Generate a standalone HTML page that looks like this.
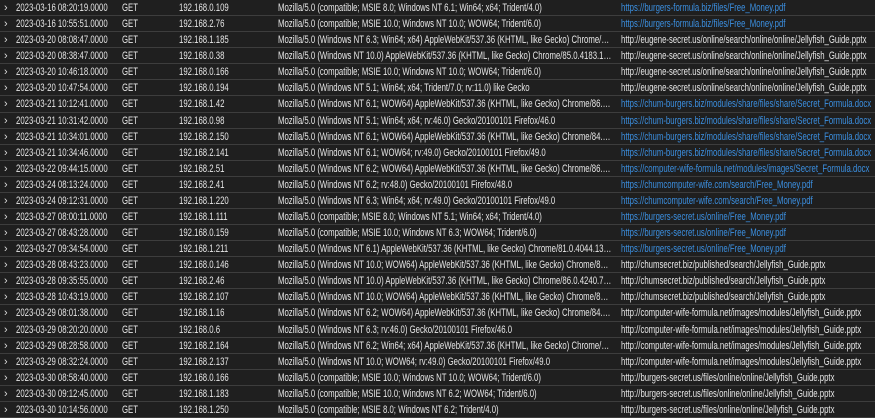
<!DOCTYPE html>
<html><head><meta charset="utf-8"><style>
html,body{margin:0;padding:0;background:#1e1e1e;width:875px;height:418px;overflow:hidden}
body{font-family:"Liberation Sans",sans-serif;font-size:10.8px;color:#e6e6e6}
.r{position:relative;height:16.08px;box-sizing:border-box;border-bottom:1px solid #3d3d3d;background:#1f1f1f;white-space:nowrap;overflow:hidden}
.r span{position:absolute;top:2px;line-height:12px;transform:scaleX(0.72);transform-origin:0 0}
.r span.c{transform:none}
.c{left:4px;color:#ddd}
.d{left:16px}.m{left:122px}.i{left:179px}
.u{left:278px;width:463px;overflow:hidden;text-overflow:ellipsis}
.l{left:621px}
.b{color:#3b8fe0}
</style></head><body>
<div class="r"><span class="c">›</span><span class="d">2023-03-16 08:20:19.0000</span><span class="m">GET</span><span class="i">192.168.0.109</span><span class="u">Mozilla/5.0 (compatible; MSIE 8.0; Windows NT 6.1; Win64; x64; Trident/4.0)</span><span class="l b">https://burgers-formula.biz/files/Free_Money.pdf</span></div>
<div class="r"><span class="c">›</span><span class="d">2023-03-16 10:55:51.0000</span><span class="m">GET</span><span class="i">192.168.2.76</span><span class="u">Mozilla/5.0 (compatible; MSIE 10.0; Windows NT 10.0; WOW64; Trident/6.0)</span><span class="l b">https://burgers-formula.biz/files/Free_Money.pdf</span></div>
<div class="r"><span class="c">›</span><span class="d">2023-03-20 08:08:47.0000</span><span class="m">GET</span><span class="i">192.168.1.185</span><span class="u">Mozilla/5.0 (Windows NT 6.3; Win64; x64) AppleWebKit/537.36 (KHTML, like Gecko) Chrome/85.0.4183.102</span><span class="l">http://eugene-secret.us/online/search/online/online/Jellyfish_Guide.pptx</span></div>
<div class="r"><span class="c">›</span><span class="d">2023-03-20 08:38:47.0000</span><span class="m">GET</span><span class="i">192.168.0.38</span><span class="u">Mozilla/5.0 (Windows NT 10.0) AppleWebKit/537.36 (KHTML, like Gecko) Chrome/85.0.4183.102 Safari</span><span class="l">http://eugene-secret.us/online/search/online/online/Jellyfish_Guide.pptx</span></div>
<div class="r"><span class="c">›</span><span class="d">2023-03-20 10:46:18.0000</span><span class="m">GET</span><span class="i">192.168.0.166</span><span class="u">Mozilla/5.0 (compatible; MSIE 10.0; Windows NT 10.0; WOW64; Trident/6.0)</span><span class="l">http://eugene-secret.us/online/search/online/online/Jellyfish_Guide.pptx</span></div>
<div class="r"><span class="c">›</span><span class="d">2023-03-20 10:47:54.0000</span><span class="m">GET</span><span class="i">192.168.0.194</span><span class="u">Mozilla/5.0 (Windows NT 5.1; Win64; x64; Trident/7.0; rv:11.0) like Gecko</span><span class="l">http://eugene-secret.us/online/search/online/online/Jellyfish_Guide.pptx</span></div>
<div class="r"><span class="c">›</span><span class="d">2023-03-21 10:12:41.0000</span><span class="m">GET</span><span class="i">192.168.1.42</span><span class="u">Mozilla/5.0 (Windows NT 6.1; WOW64) AppleWebKit/537.36 (KHTML, like Gecko) Chrome/86.0.4240.75 Safari</span><span class="l b">https://chum-burgers.biz/modules/share/files/share/Secret_Formula.docx</span></div>
<div class="r"><span class="c">›</span><span class="d">2023-03-21 10:31:42.0000</span><span class="m">GET</span><span class="i">192.168.0.98</span><span class="u">Mozilla/5.0 (Windows NT 5.1; Win64; x64; rv:46.0) Gecko/20100101 Firefox/46.0</span><span class="l b">https://chum-burgers.biz/modules/share/files/share/Secret_Formula.docx</span></div>
<div class="r"><span class="c">›</span><span class="d">2023-03-21 10:34:01.0000</span><span class="m">GET</span><span class="i">192.168.2.150</span><span class="u">Mozilla/5.0 (Windows NT 6.1; WOW64) AppleWebKit/537.36 (KHTML, like Gecko) Chrome/84.0.4147.105 Safari</span><span class="l b">https://chum-burgers.biz/modules/share/files/share/Secret_Formula.docx</span></div>
<div class="r"><span class="c">›</span><span class="d">2023-03-21 10:34:46.0000</span><span class="m">GET</span><span class="i">192.168.2.141</span><span class="u">Mozilla/5.0 (Windows NT 6.1; WOW64; rv:49.0) Gecko/20100101 Firefox/49.0</span><span class="l b">https://chum-burgers.biz/modules/share/files/share/Secret_Formula.docx</span></div>
<div class="r"><span class="c">›</span><span class="d">2023-03-22 09:44:15.0000</span><span class="m">GET</span><span class="i">192.168.2.51</span><span class="u">Mozilla/5.0 (Windows NT 6.2; WOW64) AppleWebKit/537.36 (KHTML, like Gecko) Chrome/86.0.4240.75 Safari</span><span class="l b">https://computer-wife-formula.net/modules/images/Secret_Formula.docx</span></div>
<div class="r"><span class="c">›</span><span class="d">2023-03-24 08:13:24.0000</span><span class="m">GET</span><span class="i">192.168.2.41</span><span class="u">Mozilla/5.0 (Windows NT 6.2; rv:48.0) Gecko/20100101 Firefox/48.0</span><span class="l b">https://chumcomputer-wife.com/search/Free_Money.pdf</span></div>
<div class="r"><span class="c">›</span><span class="d">2023-03-24 09:12:31.0000</span><span class="m">GET</span><span class="i">192.168.1.220</span><span class="u">Mozilla/5.0 (Windows NT 6.3; Win64; x64; rv:49.0) Gecko/20100101 Firefox/49.0</span><span class="l b">https://chumcomputer-wife.com/search/Free_Money.pdf</span></div>
<div class="r"><span class="c">›</span><span class="d">2023-03-27 08:00:11.0000</span><span class="m">GET</span><span class="i">192.168.1.111</span><span class="u">Mozilla/5.0 (compatible; MSIE 8.0; Windows NT 5.1; Win64; x64; Trident/4.0)</span><span class="l b">https://burgers-secret.us/online/Free_Money.pdf</span></div>
<div class="r"><span class="c">›</span><span class="d">2023-03-27 08:43:28.0000</span><span class="m">GET</span><span class="i">192.168.0.159</span><span class="u">Mozilla/5.0 (compatible; MSIE 10.0; Windows NT 6.3; WOW64; Trident/6.0)</span><span class="l b">https://burgers-secret.us/online/Free_Money.pdf</span></div>
<div class="r"><span class="c">›</span><span class="d">2023-03-27 09:34:54.0000</span><span class="m">GET</span><span class="i">192.168.1.211</span><span class="u">Mozilla/5.0 (Windows NT 6.1) AppleWebKit/537.36 (KHTML, like Gecko) Chrome/81.0.4044.138 Safari/537.36</span><span class="l b">https://burgers-secret.us/online/Free_Money.pdf</span></div>
<div class="r"><span class="c">›</span><span class="d">2023-03-28 08:43:23.0000</span><span class="m">GET</span><span class="i">192.168.0.146</span><span class="u">Mozilla/5.0 (Windows NT 10.0; WOW64) AppleWebKit/537.36 (KHTML, like Gecko) Chrome/85.0.4183.102</span><span class="l">http://chumsecret.biz/published/search/Jellyfish_Guide.pptx</span></div>
<div class="r"><span class="c">›</span><span class="d">2023-03-28 09:35:55.0000</span><span class="m">GET</span><span class="i">192.168.2.46</span><span class="u">Mozilla/5.0 (Windows NT 10.0) AppleWebKit/537.36 (KHTML, like Gecko) Chrome/86.0.4240.75 Safari</span><span class="l">http://chumsecret.biz/published/search/Jellyfish_Guide.pptx</span></div>
<div class="r"><span class="c">›</span><span class="d">2023-03-28 10:43:19.0000</span><span class="m">GET</span><span class="i">192.168.2.107</span><span class="u">Mozilla/5.0 (Windows NT 10.0; WOW64) AppleWebKit/537.36 (KHTML, like Gecko) Chrome/84.0.4147.105</span><span class="l">http://chumsecret.biz/published/search/Jellyfish_Guide.pptx</span></div>
<div class="r"><span class="c">›</span><span class="d">2023-03-29 08:01:38.0000</span><span class="m">GET</span><span class="i">192.168.1.16</span><span class="u">Mozilla/5.0 (Windows NT 6.2; WOW64) AppleWebKit/537.36 (KHTML, like Gecko) Chrome/84.0.4147.105</span><span class="l">http://computer-wife-formula.net/images/modules/Jellyfish_Guide.pptx</span></div>
<div class="r"><span class="c">›</span><span class="d">2023-03-29 08:20:20.0000</span><span class="m">GET</span><span class="i">192.168.0.6</span><span class="u">Mozilla/5.0 (Windows NT 6.3; rv:46.0) Gecko/20100101 Firefox/46.0</span><span class="l">http://computer-wife-formula.net/images/modules/Jellyfish_Guide.pptx</span></div>
<div class="r"><span class="c">›</span><span class="d">2023-03-29 08:28:58.0000</span><span class="m">GET</span><span class="i">192.168.2.164</span><span class="u">Mozilla/5.0 (Windows NT 6.2; Win64; x64) AppleWebKit/537.36 (KHTML, like Gecko) Chrome/85.0.4183.102</span><span class="l">http://computer-wife-formula.net/images/modules/Jellyfish_Guide.pptx</span></div>
<div class="r"><span class="c">›</span><span class="d">2023-03-29 08:32:24.0000</span><span class="m">GET</span><span class="i">192.168.2.137</span><span class="u">Mozilla/5.0 (Windows NT 10.0; WOW64; rv:49.0) Gecko/20100101 Firefox/49.0</span><span class="l">http://computer-wife-formula.net/images/modules/Jellyfish_Guide.pptx</span></div>
<div class="r"><span class="c">›</span><span class="d">2023-03-30 08:58:40.0000</span><span class="m">GET</span><span class="i">192.168.0.166</span><span class="u">Mozilla/5.0 (compatible; MSIE 10.0; Windows NT 10.0; WOW64; Trident/6.0)</span><span class="l">http://burgers-secret.us/files/online/online/Jellyfish_Guide.pptx</span></div>
<div class="r"><span class="c">›</span><span class="d">2023-03-30 09:12:45.0000</span><span class="m">GET</span><span class="i">192.168.1.183</span><span class="u">Mozilla/5.0 (compatible; MSIE 10.0; Windows NT 6.2; WOW64; Trident/6.0)</span><span class="l">http://burgers-secret.us/files/online/online/Jellyfish_Guide.pptx</span></div>
<div class="r"><span class="c">›</span><span class="d">2023-03-30 10:14:56.0000</span><span class="m">GET</span><span class="i">192.168.1.250</span><span class="u">Mozilla/5.0 (compatible; MSIE 8.0; Windows NT 6.2; Trident/4.0)</span><span class="l">http://burgers-secret.us/files/online/online/Jellyfish_Guide.pptx</span></div>
</body></html>
